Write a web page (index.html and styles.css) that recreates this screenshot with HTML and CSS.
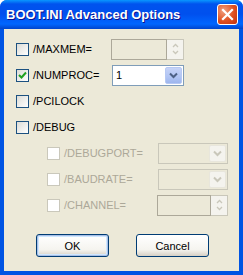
FILE: index.html
```html
<!DOCTYPE html>
<html lang="en">
<head>
    <meta charset="UTF-8">
    <title>BOOT.INI Advanced Options</title>
    <link rel="stylesheet" href="styles.css">
</head>
<body>
    <div class="window">
        <div class="titlebar">
            <span class="title">BOOT.INI Advanced Options</span>
            <span class="close">
                <svg width="13" height="13" viewBox="0 0 13 13">
                    <path d="M2 2 L11 11 M11 2 L2 11" stroke="#fff" stroke-width="2.2" stroke-linecap="square"/>
                </svg>
            </span>
        </div>
        <div class="content">
            <div class="options">
                <div class="row">
                    <span class="check"></span>
                    <span class="label">/MAXMEM=</span>
                    <span class="field spin disabled">
                        <span class="box"></span>
                        <span class="arrows">
                            <svg width="9" height="16" viewBox="0 0 9 16">
                                <path d="M2 6 L4.5 3.5 L7 6 M2 10 L4.5 12.5 L7 10" fill="none" stroke="#c9c7ba" stroke-width="1.3"/>
                            </svg>
                        </span>
                    </span>
                </div>
                <div class="row">
                    <span class="check checked">
                        <svg width="9" height="9" viewBox="0 0 9 9">
                            <path d="M1 4 L3.5 6.5 L8 1.5" fill="none" stroke="#21a121" stroke-width="2"/>
                        </svg>
                    </span>
                    <span class="label">/NUMPROC=</span>
                    <span class="field combo">
                        <span class="box">1</span>
                        <span class="drop">
                            <svg width="9" height="7" viewBox="0 0 9 7">
                                <path d="M1 1.5 L4.5 5 L8 1.5" fill="none" stroke="#4d6185" stroke-width="2"/>
                            </svg>
                        </span>
                    </span>
                </div>
                <div class="row">
                    <span class="check"></span>
                    <span class="label">/PCILOCK</span>
                </div>
                <div class="row">
                    <span class="check"></span>
                    <span class="label">/DEBUG</span>
                </div>
                <div class="row sub">
                    <span class="check off"></span>
                    <span class="label dim">/DEBUGPORT=</span>
                    <span class="field combo disabled">
                        <span class="box"></span>
                        <span class="drop">
                            <svg width="9" height="7" viewBox="0 0 9 7">
                                <path d="M1 1.5 L4.5 5 L8 1.5" fill="none" stroke="#c9c7ba" stroke-width="2"/>
                            </svg>
                        </span>
                    </span>
                </div>
                <div class="row sub">
                    <span class="check off"></span>
                    <span class="label dim">/BAUDRATE=</span>
                    <span class="field combo disabled">
                        <span class="box"></span>
                        <span class="drop">
                            <svg width="9" height="7" viewBox="0 0 9 7">
                                <path d="M1 1.5 L4.5 5 L8 1.5" fill="none" stroke="#c9c7ba" stroke-width="2"/>
                            </svg>
                        </span>
                    </span>
                </div>
                <div class="row sub">
                    <span class="check off"></span>
                    <span class="label dim">/CHANNEL=</span>
                    <span class="field spin disabled">
                        <span class="box"></span>
                        <span class="arrows">
                            <svg width="9" height="16" viewBox="0 0 9 16">
                                <path d="M2 6 L4.5 3.5 L7 6 M2 10 L4.5 12.5 L7 10" fill="none" stroke="#c9c7ba" stroke-width="1.3"/>
                            </svg>
                        </span>
                    </span>
                </div>
            </div>
            <div class="buttons">
                <button class="default">OK</button>
                <button>Cancel</button>
            </div>
        </div>
    </div>
</body>
</html>
```

FILE: styles.css
```css
body {
    margin: 0;
    font-family: "Liberation Sans", Arial, sans-serif;
    font-size: 11px;
}

.window {
    width: 243px;
    height: 275px;
    display: flex;
    flex-direction: column;
    background: #0054e3;
    border-radius: 7px 7px 0 0;
    overflow: hidden;
}

.titlebar {
    height: 29px;
    flex-shrink: 0;
    display: flex;
    align-items: center;
    justify-content: space-between;
    padding: 0 5px 0 6px;
    background: linear-gradient(#0997ff 0px, #0053ee 4px, #0050ee 14px, #0066ff 24px, #0044cc 29px);
}

.title {
    color: #fff;
    font-weight: bold;
    font-size: 13px;
    text-shadow: 1px 1px #0f1089;
}

.close {
    width: 19px;
    height: 19px;
    border: 1px solid #fff;
    border-radius: 3px;
    background: radial-gradient(circle at 30% 30%, #f0a080, #e05020 55%, #c03010);
    display: flex;
    align-items: center;
    justify-content: center;
}

.content {
    flex: 1;
    margin: 0 4px 4px 4px;
    background: #ece9d8;
    padding: 7px 0 0 12px;
    display: flex;
    flex-direction: column;
}

.options {
    display: flex;
    flex-direction: column;
}

.row {
    height: 26px;
    display: flex;
    align-items: center;
}

.row.sub {
    padding-left: 31px;
}

.check {
    width: 11px;
    height: 11px;
    border: 1px solid #1c5180;
    background: linear-gradient(135deg, #dcdcd7, #fff);
    display: flex;
    align-items: center;
    justify-content: center;
    flex-shrink: 0;
}

.check.off {
    border-color: #cac8bb;
    background: #fff;
}

.label {
    width: 79px;
    padding-left: 4px;
    color: #000;
}

.sub .label {
    width: 94px;
}

.dim {
    color: #aca899;
}

.field {
    height: 21px;
    width: 72px;
    display: flex;
    box-sizing: border-box;
    border: 1px solid #7f9db9;
    background: #fff;
}

.sub .field {
    width: 70px;
}

.field.disabled {
    border-color: #c9c7ba;
    background: #ece9d8;
}

.field .box {
    flex: 1;
    padding-left: 3px;
    line-height: 19px;
}

.spin.disabled .box {
    border: 1px solid #aca899;
    margin: -1px 0 -1px -1px;
}

.spin.disabled {
    border-left: none;
}

.arrows {
    width: 16px;
    display: flex;
    align-items: center;
    justify-content: center;
    background: #f4f3ee;
}

.drop {
    width: 17px;
    margin: 1px;
    border-radius: 2px;
    background: linear-gradient(#c6d3f7, #b0c4f3 60%, #9db5ee);
    border: 1px solid #b6c8f3;
    box-sizing: border-box;
    display: flex;
    align-items: center;
    justify-content: center;
}

.disabled .drop {
    background: #f4f3ee;
    border-color: #e8e6dc;
}

.buttons {
    display: flex;
    gap: 27px;
    margin-top: 16px;
    padding-left: 20px;
}

button {
    width: 73px;
    height: 23px;
    font-family: "Liberation Sans", Arial, sans-serif;
    font-size: 11px;
    color: #000;
    border: 1px solid #003c74;
    border-radius: 3px;
    background: linear-gradient(#fff, #f5f4ef 70%, #d6d0c5);
    padding: 0;
}

button.default {
    box-shadow: inset 0 0 0 1px #a9bfe6, inset 0 0 0 2px #cee7ff;
}
```
